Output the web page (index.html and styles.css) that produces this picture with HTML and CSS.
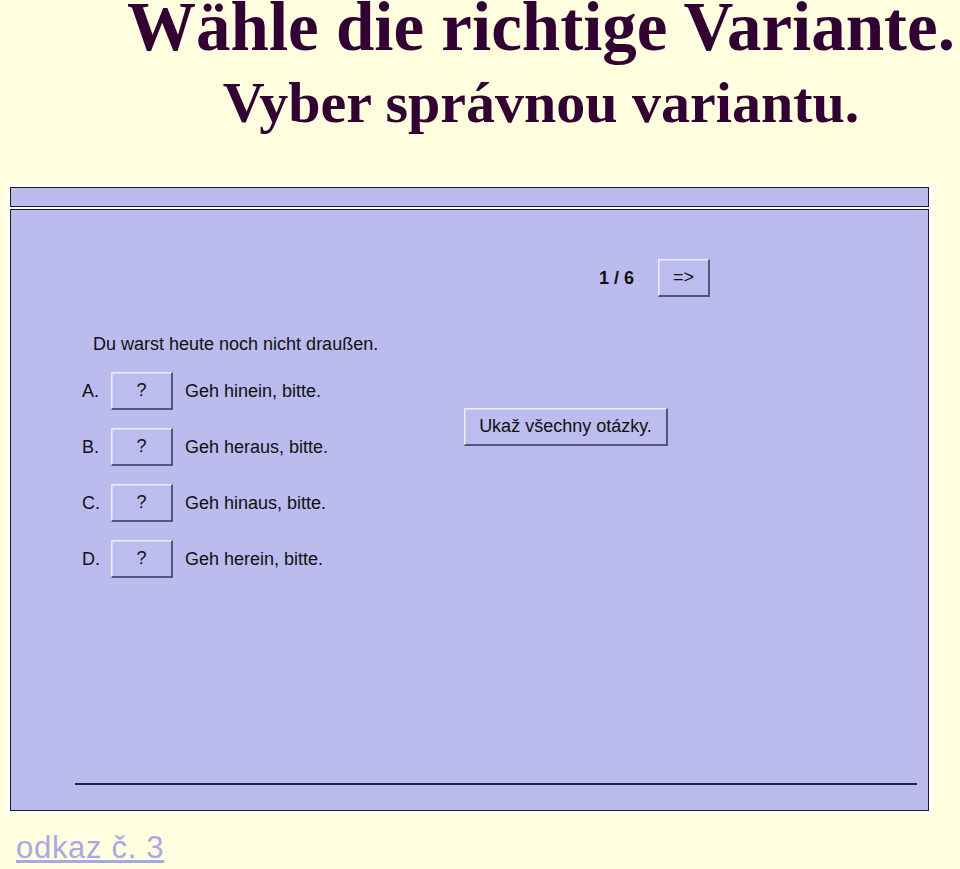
FILE: index.html
```html
<!DOCTYPE html>
<html lang="de">
<head>
<meta charset="utf-8">
<title>Wähle die richtige Variante.</title>
<link rel="stylesheet" href="styles.css">
</head>
<body>
<div class="titles">
  <div class="t1">Wähle die richtige Variante.</div>
  <div class="t2">Vyber správnou variantu.</div>
</div>
<div class="frame">
  <div class="topbar"></div>
  <div class="panel">
    <div class="nav">
      <span class="count">1 / 6</span>
      <button class="btn btn-next">=&gt;</button>
    </div>
    <div class="question">Du warst heute noch nicht draußen.</div>
    <div class="content">
      <div class="options">
        <div class="opt"><span class="letter">A.</span><button class="btn btn-q">?</button><span class="label">Geh hinein, bitte.</span></div>
        <div class="opt"><span class="letter">B.</span><button class="btn btn-q">?</button><span class="label">Geh heraus, bitte.</span></div>
        <div class="opt"><span class="letter">C.</span><button class="btn btn-q">?</button><span class="label">Geh hinaus, bitte.</span></div>
        <div class="opt"><span class="letter">D.</span><button class="btn btn-q">?</button><span class="label">Geh herein, bitte.</span></div>
      </div>
      <button class="btn btn-all">Ukaž všechny otázky.</button>
    </div>
    <div class="rule"></div>
  </div>
</div>
<a class="link" href="#">odkaz č. 3</a>
</body>
</html>
```
FILE: styles.css
```css
html, body {
  margin: 0;
  padding: 0;
  overflow: hidden;
}
body {
  background: #FFFFE0;
  font-family: "Liberation Sans", Arial, sans-serif;
}
.titles {
  width: 838px;
  margin-left: 122px;
  text-align: center;
  font-family: "Liberation Serif", "Times New Roman", serif;
  font-weight: bold;
  color: #330033;
  white-space: nowrap;
}
.t1 {
  font-size: 69px;
  line-height: 54px;
}
.t2 {
  font-size: 58px;
  line-height: 58px;
  margin-top: 20px;
}
.frame {
  margin-top: 51px;
  margin-left: 6px;
  width: 919px;
  padding: 4px;
  background: #FFFFF4;
}
.topbar {
  height: 18px;
  border: 1px solid #1a1a2e;
  background: #BBBBEE;
}
.panel {
  margin-top: 2px;
  height: 600px;
  border: 1px solid #1a1a2e;
  background: #BBBBEE;
  display: flex;
  flex-direction: column;
  color: #111;
  font-size: 18px;
}
.nav {
  display: flex;
  align-items: center;
  margin-top: 49px;
  padding-left: 588px;
  gap: 24px;
}
.count {
  font-weight: bold;
}
.btn {
  font-family: "Liberation Sans", Arial, sans-serif;
  font-size: 18px;
  color: #111;
  background: #BCBCEE;
  height: 38px;
  padding: 0;
  border-style: solid;
  border-width: 1px 2px 2px 1px;
  border-color: #ECECFF #55557A #55557A #ECECFF;
  box-shadow: inset 1px 1px 0 #D6D6FA;
}
.btn-next {
  width: 52px;
}
.question {
  margin-top: 36px;
  padding-left: 82px;
  line-height: 22px;
}
.content {
  display: flex;
  margin-top: 17px;
  padding-left: 71px;
}
.options {
  width: 382px;
  display: flex;
  flex-direction: column;
  gap: 18px;
}
.opt {
  display: flex;
  align-items: center;
  height: 38px;
}
.letter {
  width: 29px;
}
.btn-q {
  width: 62px;
}
.label {
  margin-left: 12px;
}
.btn-all {
  width: 204px;
  margin-top: 36px;
}
.rule {
  margin-top: auto;
  margin-left: 64px;
  width: 842px;
  height: 2px;
  background: #22223F;
  margin-bottom: 25px;
}
.link {
  display: inline-block;
  margin-top: 16px;
  margin-left: 16px;
  font-size: 31px;
  line-height: 34px;
  letter-spacing: 0.7px;
  color: #A8A8E8;
  text-decoration: underline;
}
```
